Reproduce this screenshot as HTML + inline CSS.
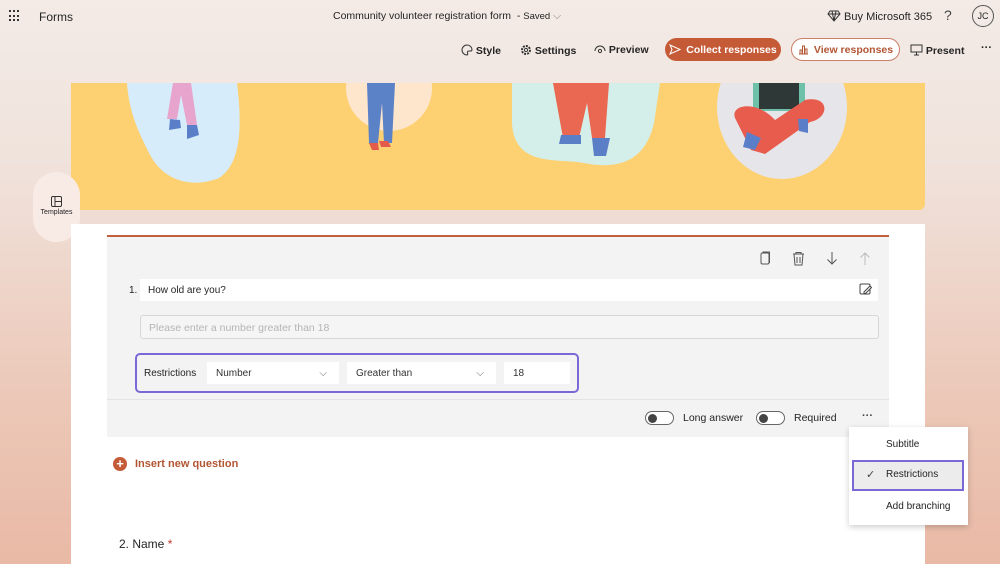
<!DOCTYPE html>
<html><head><meta charset="utf-8"><style>
*{margin:0;padding:0;box-sizing:border-box}
body{width:1000px;height:564px;overflow:hidden;font-family:"Liberation Sans",sans-serif;background:linear-gradient(180deg,#f3ebe7 0%,#f0e2db 30%,#ecc8b8 70%,#e9b9a5 100%);position:relative;color:#242424}
.a{position:absolute}
.t{font-size:10.5px}
.btn{position:absolute;height:23px;border-radius:12px;font-size:10.5px;display:flex;align-items:center;justify-content:center;font-weight:bold}
.sel{position:absolute;background:#fff;height:22px;top:362px;font-size:10px;display:flex;align-items:center;padding-left:9px;color:#333}
.tog{position:absolute;width:29px;height:14px;border:1px solid #666;border-radius:8px;background:#fff}
.tog:after{content:"";position:absolute;left:2px;top:2px;width:9px;height:9px;border-radius:50%;background:#444}
</style></head><body>
<div class="a" style="left:9px;top:10px;width:12px;height:12px;display:grid;grid-template-columns:repeat(3,2px);gap:2px">
<i style="background:#333;width:2px;height:2px"></i><i style="background:#333;width:2px;height:2px"></i><i style="background:#333;width:2px;height:2px"></i><i style="background:#333;width:2px;height:2px"></i><i style="background:#333;width:2px;height:2px"></i><i style="background:#333;width:2px;height:2px"></i><i style="background:#333;width:2px;height:2px"></i><i style="background:#333;width:2px;height:2px"></i><i style="background:#333;width:2px;height:2px"></i></div>
<div class="a" style="left:39px;top:10px;font-size:12px">Forms</div>
<div class="a" style="left:333px;top:10px;font-size:10.5px">Community volunteer registration form &nbsp;- <span style="font-size:9.5px">Saved</span> <span style="color:#888">⌵</span></div>
<div class="a" style="left:827px;top:10px;font-size:11px">
<svg width="14" height="12" viewBox="0 0 14 12" style="vertical-align:-2px"><path d="M3 1h8l2 3-6 7-6-7zM1 4h12M5 1l2 10M9 1l-2 10" fill="none" stroke="#333" stroke-width="1"/></svg> Buy Microsoft 365</div>
<div class="a" style="left:944px;top:7px;font-size:14px;color:#444">?</div>
<div class="a" style="left:972px;top:5px;width:22px;height:22px;border:1px solid #555;border-radius:50%;font-size:9px;display:flex;align-items:center;justify-content:center">JC</div>
<div class="a t" style="left:461px;top:44px;font-weight:bold">
<svg width="12" height="12" viewBox="0 0 12 12" style="vertical-align:-2px"><path d="M6 1a5 5 0 1 0 0 10c1 0 1-1 .5-2s0-2 1.5-2h2a1.5 1.5 0 0 0 1-1.5A5 5 0 0 0 6 1z" fill="none" stroke="#333"/></svg> Style</div>
<div class="a t" style="left:520px;top:44px;font-weight:bold">
<svg width="12" height="12" viewBox="0 0 12 12" style="vertical-align:-2px"><circle cx="6" cy="6" r="4" fill="none" stroke="#333" stroke-dasharray="2 1.1" stroke-width="2"/><circle cx="6" cy="6" r="1.6" fill="none" stroke="#333"/></svg> Settings</div>
<div class="a t" style="left:594px;top:44px;font-weight:bold">
<svg width="12" height="10" viewBox="0 0 12 10" style="vertical-align:-1px"><path d="M1 7a5 5 0 0 1 10 0" fill="none" stroke="#333"/><circle cx="6" cy="7" r="1.6" fill="none" stroke="#333"/></svg> Preview</div>
<div class="btn" style="left:665px;top:38px;width:116px;background:#c55a36;color:#fff">
<svg width="12" height="11" viewBox="0 0 12 11" style="margin-right:5px"><path d="M1 1l10 4.5L1 10l2-4.5z" fill="none" stroke="#fff"/></svg>Collect responses</div>
<div class="btn" style="left:791px;top:38px;width:109px;background:#fff;border:1px solid #c9806a;color:#b25533">
<svg width="11" height="10" viewBox="0 0 11 10" style="margin-right:5px"><path d="M1 9h9M2 9V5h2v4M4.5 9V1h2v8M7 9V4h2v5" fill="none" stroke="#b25533"/></svg>View responses</div>
<div class="a t" style="left:910px;top:44px;font-weight:bold">
<svg width="13" height="12" viewBox="0 0 13 12" style="vertical-align:-2px"><rect x="1" y="1" width="11" height="7" fill="none" stroke="#333"/><path d="M6.5 8v3M4 11h5" stroke="#333"/></svg> Present</div>
<div class="a" style="left:981px;top:42px;font-size:11px;font-weight:bold">···</div>
<div class="a" style="left:71px;top:83px;width:854px;height:127px;background:#fdd072;border-radius:0 0 6px 6px;overflow:hidden">
<svg width="854" height="127">
<path d="M56 0h110c5 40 5 80-18 95c-25 10-55 5-70-25c-10-20-20-40-22-70z" fill="#d6ecfb"/>
<path d="M102 0h18l6 42h-10l-6-30-4 24h-10z" fill="#e7a4cc"/>
<path d="M99 36l10 1 1 8-12 2z M116 42l10 0 2 10-12 4z" fill="#5a7fc8"/>
<circle cx="318" cy="5" r="43" fill="#fde6cc"/>
<path d="M296 0h28l-3 60h-8l-2-40-4 40h-9z" fill="#5b82c6"/>
<path d="M298 60h9l1 7h-7zM308 58h9l3 6h-10z" fill="#e35b4b"/>
<path d="M441 0h148l-6 40c-10 45-45 45-70 40s-70 5-72-40z" fill="#d4efe9"/>
<path d="M482 0h56l-4 55h-13l-5-35-8 35h-16z" fill="#ea6852"/>
<path d="M490 52l20 0v9h-22zM521 55h18l-4 18-12 0z" fill="#5b7fc6"/>
<ellipse cx="711" cy="24" rx="65" ry="72" fill="#e6e6ea"/>
<rect x="682" y="0" width="52" height="28" fill="#6fc0a8"/>
<rect x="688" y="0" width="40" height="26" fill="#2e3836"/>
<path d="M664 35c-5-14 22-18 40 2l30-20c25-5 25 18 5 22l-45 32-14-4z" fill="#e85c4e"/>
<path d="M676 49l14 6-6 12-12-3zM727 36l10 0 0 14-9-2z" fill="#5a7fc8"/>
</svg></div>
<div class="a" style="left:33px;top:172px;width:47px;height:70px;border-radius:24px;background:#f8ebe6;text-align:center;padding-top:24px;font-size:7px">
<svg width="11" height="11" viewBox="0 0 11 11"><rect x=".5" y=".5" width="10" height="10" rx="1.5" fill="none" stroke="#333"/><path d="M4 .5v10M4 5.5h6.5" stroke="#333"/></svg><div>Templates</div></div>
<div class="a" style="left:71px;top:224px;width:854px;height:340px;background:#fff"></div>
<div class="a" style="left:107px;top:235px;width:782px;height:202px;background:#f3f3f3;border-top:2px solid #c0603d"></div>
<div class="a" style="left:107px;top:399px;width:782px;height:1px;background:#e3e3e3"></div>
<svg class="a" style="left:758px;top:251px" width="115" height="15" viewBox="0 0 115 15">
<rect x="3" y="2" width="8" height="11" rx="1.5" fill="none" stroke="#555"/><path d="M5 2V1h6.5v11" fill="none" stroke="#555"/>
<path d="M35 3h11M38 3V1.5h5V3M36 3l1 11h7l1-11M39 6v6M42 6v6" fill="none" stroke="#555"/>
<path d="M74 1v12M69.5 8.5l4.5 4.5 4.5-4.5" fill="none" stroke="#555"/>
<path d="M107 14V2M102.5 6.5l4.5-4.5 4.5 4.5" fill="none" stroke="#bbb"/>
</svg>
<div class="a" style="left:129px;top:285px;font-size:10px">1.</div>
<div class="a" style="left:140px;top:279px;width:738px;height:22px;background:#fff;font-size:10px;padding:6px 8px">How old are you?</div>
<svg class="a" style="left:859px;top:283px" width="13" height="13" viewBox="0 0 13 13"><rect x="1" y="1" width="10" height="10" rx="1.5" fill="none" stroke="#444"/><path d="M5 9l6-6 1.5 1.5-6 6H5z" fill="#fff" stroke="#444"/></svg>
<div class="a" style="left:140px;top:315px;width:739px;height:24px;border:1px solid #d6d6d6;border-radius:3px;background:#f5f5f5;font-size:10.5px;color:#b5b5b5;padding:6px 8px">Please enter a number greater than 18</div>
<div class="a" style="left:135px;top:353px;width:444px;height:40px;border:2px solid #7b68d6;border-radius:5px"></div>
<div class="a" style="left:144px;top:368px;font-size:10px">Restrictions</div>
<div class="sel" style="left:207px;width:132px">Number<span style="position:absolute;right:12px;color:#666">⌵</span></div>
<div class="sel" style="left:347px;width:149px">Greater than<span style="position:absolute;right:12px;color:#666">⌵</span></div>
<div class="sel" style="left:504px;width:66px">18</div>
<div class="tog" style="left:645px;top:411px"></div>
<div class="a" style="left:683px;top:412px;font-size:10.5px">Long answer</div>
<div class="tog" style="left:756px;top:411px"></div>
<div class="a" style="left:794px;top:412px;font-size:10.5px">Required</div>
<div class="a" style="left:862px;top:410px;font-size:11px;font-weight:bold;color:#444">···</div>
<div class="a" style="left:849px;top:427px;width:119px;height:98px;background:#fff;box-shadow:0 2px 6px rgba(0,0,0,.2)"></div>
<div class="a" style="left:886px;top:439px;font-size:10px">Subtitle</div>
<div class="a" style="left:852px;top:460px;width:112px;height:31px;background:#ececec;border:2px solid #7b68d6"></div>
<div class="a" style="left:866px;top:468px;font-size:11px;color:#444">✓</div>
<div class="a" style="left:886px;top:469px;font-size:10px">Restrictions</div>
<div class="a" style="left:886px;top:501px;font-size:10px">Add branching</div>
<div class="a" style="left:113px;top:457px;width:14px;height:14px;border-radius:50%;background:#c55a36;color:#fff;font-size:13px;line-height:14px;text-align:center;font-weight:bold">+</div>
<div class="a" style="left:135px;top:458px;font-size:11px;color:#b25533;font-weight:bold">Insert new question</div>
<div class="a" style="left:119px;top:537px;font-size:12px">2. Name <span style="color:#c0392b">*</span></div>
</body></html>
